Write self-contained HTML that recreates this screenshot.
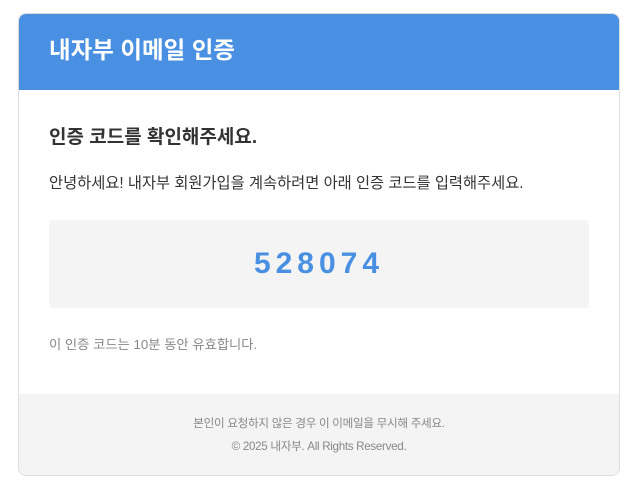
<!DOCTYPE html>
<html><head><meta charset="utf-8"><style>
*{margin:0;padding:0;box-sizing:border-box}
body{width:639px;height:485px;background:#fff;font-family:"Liberation Sans","Noto Sans CJK KR",sans-serif;}
.card{position:absolute;left:18px;top:13px;width:602px;height:463px;border:1px solid #ddd;border-radius:8px;overflow:hidden;background:#fff}
.hd{height:76px;background:#4a90e2;color:#fff;font-size:23.5px;font-weight:bold;padding-left:30px;line-height:72px}
.h2{position:absolute;left:30px;top:108px;font-size:19px;font-weight:bold;color:#333}
.p{position:absolute;left:30px;top:157px;font-size:15.3px;color:#333}
.code{position:absolute;left:30px;top:206px;width:540px;height:88px;background:#f4f4f4;border-radius:4px;text-align:center;line-height:88px;font-size:30px;font-weight:bold;color:#4a90e2;letter-spacing:5px}
.note{position:absolute;left:30px;top:320px;font-size:13.3px;color:#888}
.ft{position:absolute;left:0;top:380px;width:600px;height:82px;background:#f4f4f4;text-align:center;font-size:11.6px;color:#888;letter-spacing:-0.3px}
.ft div{position:absolute;width:100%}
</style></head><body>
<div class="card">
<div class="hd">내자부 이메일 인증</div>
<div class="h2">인증 코드를 확인해주세요.</div>
<div class="p">안녕하세요! 내자부 회원가입을 계속하려면 아래 인증 코드를 입력해주세요.</div>
<div class="code">528074</div>
<div class="note">이 인증 코드는 10분 동안 유효합니다.</div>
<div class="ft"><div style="top:21px">본인이 요청하지 않은 경우 이 이메일을 무시해 주세요.</div><div style="top:44px">© 2025 내자부. All Rights Reserved.</div></div>
</div>
</body></html>
